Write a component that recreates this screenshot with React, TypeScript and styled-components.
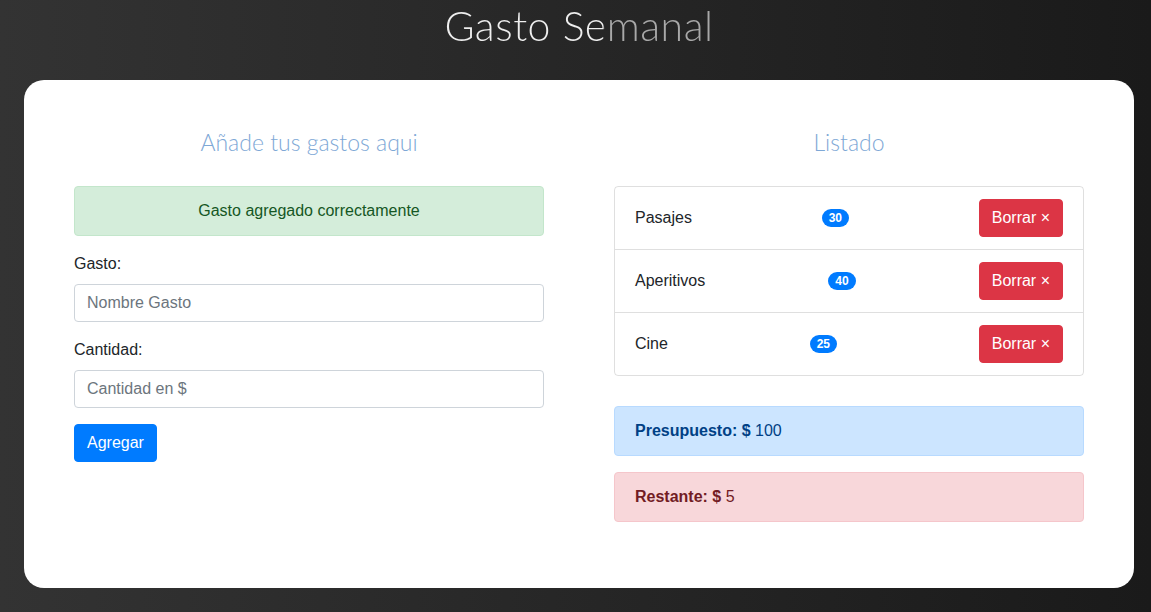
import React from "react";
import styled, { createGlobalStyle } from "styled-components";

const GlobalStyle = createGlobalStyle`
  * { box-sizing: border-box; }
  html, body { margin: 0; padding: 0; }
  body {
    min-height: 612px;
    background: linear-gradient(to right, #333333, #1a1a1a);
    font-family: "Liberation Sans", Arial, sans-serif;
    font-size: 16px;
    color: #212529;
  }
`;

const Page = styled.div`
  width: 1110px;
  margin-left: 24px;
  min-height: 612px;
`;

const Title = styled.h1`
  margin: 0;
  height: 80px;
  padding-top: 2px;
  text-align: center;
  font-family: "Lato", "Open Sans", sans-serif;
  font-weight: 300;
  font-size: 41px;
  line-height: 48px;
  letter-spacing: 0.5px;
  span {
    background: linear-gradient(to right, #eeeeee 0 59%, #a8a8a8 59% 100%);
    -webkit-background-clip: text;
    background-clip: text;
    color: transparent;
  }
`;

const Card = styled.main`
  background: #fff;
  border-radius: 20px;
  padding: 50px;
  display: grid;
  grid-template-columns: 470px 470px;
  column-gap: 70px;
`;

const Column = styled.section`
  display: flex;
  flex-direction: column;
`;

const Heading = styled.h2`
  margin: 0 0 31px;
  text-align: center;
  font-family: "Lato", "Open Sans", sans-serif;
  font-weight: 300;
  font-size: 23px;
  line-height: 25px;
  color: #7ea8d6;
`;

const Alert = styled.div<{ $tone: "success" | "primary" | "danger"; $center?: boolean }>`
  padding: 12px 20px;
  margin-bottom: 16px;
  border: 1px solid;
  border-radius: 4px;
  line-height: 24px;
  text-align: ${(p) => (p.$center ? "center" : "left")};
  ${(p) =>
    p.$tone === "success"
      ? "background:#d4edda;border-color:#c3e6cb;color:#155724;"
      : p.$tone === "primary"
      ? "background:#cce5ff;border-color:#b8daff;color:#004085;"
      : "background:#f8d7da;border-color:#f5c6cb;color:#721c24;"}
`;

const Field = styled.div`
  display: flex;
  flex-direction: column;
  margin-bottom: 16px;
`;

const Label = styled.label`
  line-height: 24px;
  margin-bottom: 8px;
`;

const Input = styled.input`
  height: 38px;
  padding: 6px 12px;
  border: 1px solid #ced4da;
  border-radius: 4px;
  font-family: "Liberation Sans", Arial, sans-serif;
  font-size: 16px;
  color: #495057;
  &::placeholder { color: #6c757d; opacity: 1; }
`;

const Button = styled.button<{ $variant: "primary" | "danger" }>`
  align-self: flex-start;
  height: 38px;
  padding: 6px 12px;
  border: 1px solid ${(p) => (p.$variant === "primary" ? "#007bff" : "#dc3545")};
  background: ${(p) => (p.$variant === "primary" ? "#007bff" : "#dc3545")};
  color: #fff;
  border-radius: 4px;
  font-family: "Liberation Sans", Arial, sans-serif;
  font-size: 16px;
  line-height: 24px;
`;

const List = styled.ul`
  list-style: none;
  margin: 0 0 30px;
  padding: 0;
  border: 1px solid rgba(0, 0, 0, 0.125);
  border-radius: 4px;
`;

const Item = styled.li`
  display: flex;
  align-items: center;
  justify-content: space-between;
  padding: 12px 20px;
  & + & { border-top: 1px solid rgba(0, 0, 0, 0.125); }
`;

const Name = styled.span`
  line-height: 24px;
`;

const Badge = styled.span`
  display: inline-block;
  padding: 3px 7px;
  font-size: 12px;
  font-weight: 700;
  line-height: 12px;
  color: #fff;
  background: #007bff;
  border-radius: 10rem;
`;

const gastos = [
  { nombre: "Pasajes", cantidad: 30 },
  { nombre: "Aperitivos", cantidad: 40 },
  { nombre: "Cine", cantidad: 25 },
];

export default function App() {
  return (
    <>
      <GlobalStyle />
      <Page>
        <Title>
          <span>Gasto Semanal</span>
        </Title>
        <Card>
          <Column>
            <Heading>Añade tus gastos aqui</Heading>
            <Alert $tone="success" $center>
              Gasto agregado correctamente
            </Alert>
            <Field>
              <Label>Gasto:</Label>
              <Input placeholder="Nombre Gasto" />
            </Field>
            <Field>
              <Label>Cantidad:</Label>
              <Input placeholder="Cantidad en $" />
            </Field>
            <Button $variant="primary">Agregar</Button>
          </Column>
          <Column>
            <Heading>Listado</Heading>
            <List>
              {gastos.map((g) => (
                <Item key={g.nombre}>
                  <Name>{g.nombre}</Name>
                  <Badge>{g.cantidad}</Badge>
                  <Button $variant="danger">Borrar ×</Button>
                </Item>
              ))}
            </List>
            <Alert $tone="primary">
              <strong>Presupuesto: $</strong> 100
            </Alert>
            <Alert $tone="danger">
              <strong>Restante: $</strong> 5
            </Alert>
          </Column>
        </Card>
      </Page>
    </>
  );
}
